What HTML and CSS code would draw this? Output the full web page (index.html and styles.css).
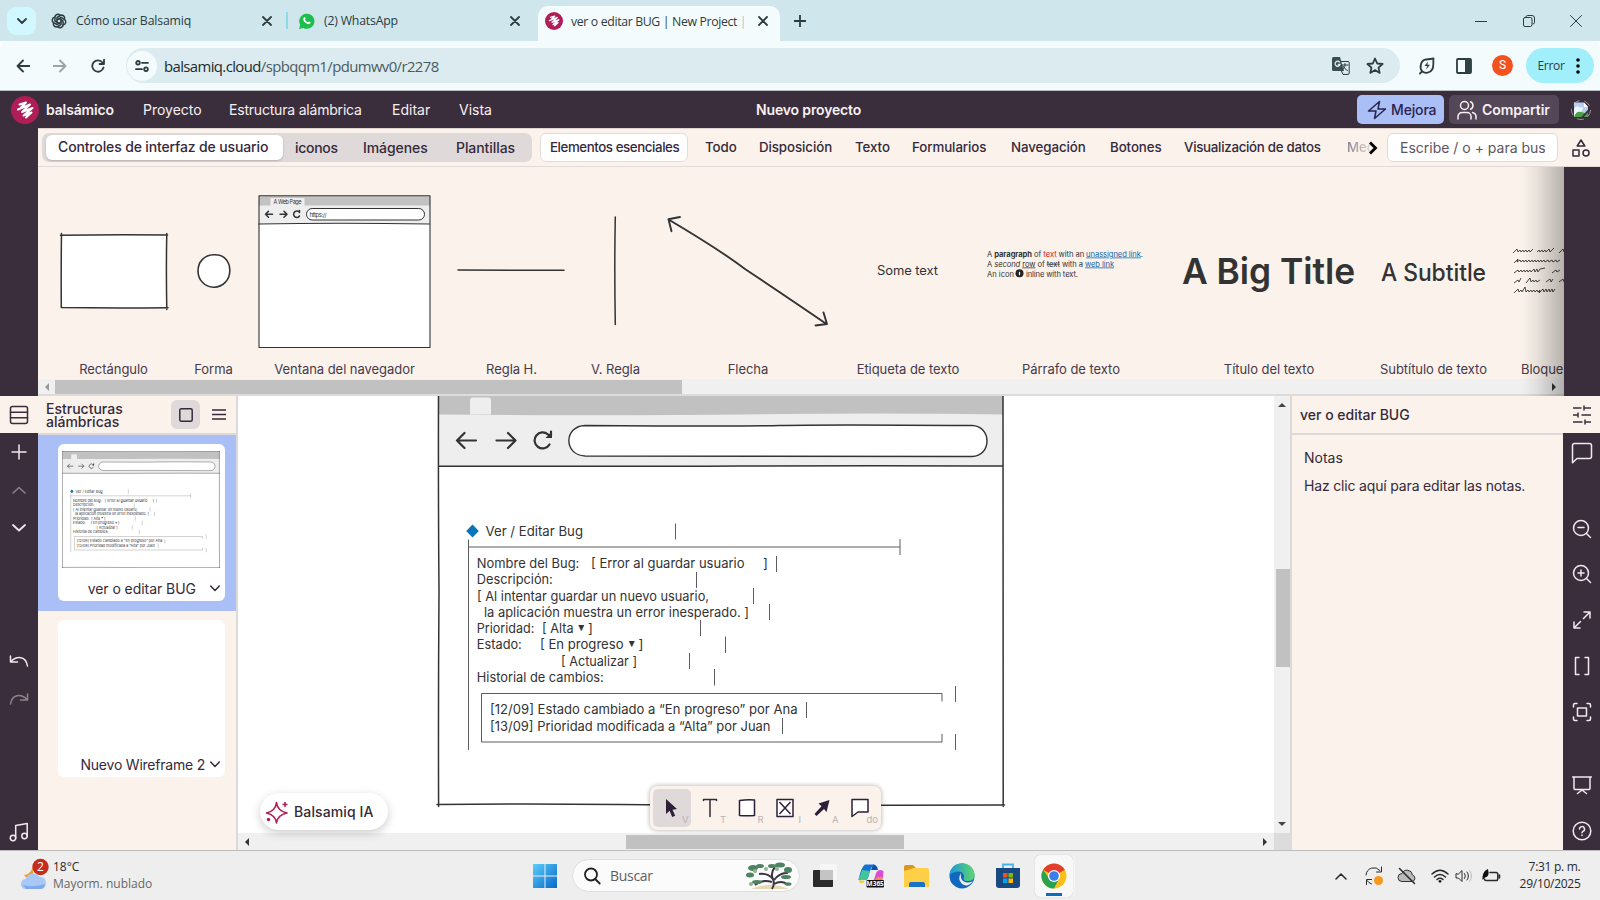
FILE: index.html
```html
<!DOCTYPE html>
<html lang="es">
<head>
<meta charset="utf-8">
<title>ver o editar BUG | New Project</title>
<link rel="stylesheet" href="styles.css">
</head>
<body>
<div class="screen">

  <header class="tabs">
    <span class="tab-search"><svg width="12" height="12" viewBox="0 0 12 12"><path d="M2 4l4 4 4-4" class="ln b2"/></svg></span>
    <div class="tab t1">
      <svg class="fav" width="16" height="16" viewBox="0 0 16 16"><g class="ln b15"><path id="petal" d="M6 9.200V4.500L9.300 2.500a3 3 0 0 1 4.200 3.600"/><use href="#petal" transform="rotate(60 8 8)"/><use href="#petal" transform="rotate(120 8 8)"/><use href="#petal" transform="rotate(180 8 8)"/><use href="#petal" transform="rotate(240 8 8)"/><use href="#petal" transform="rotate(300 8 8)"/></g></svg>
      <span class="tt">Cómo usar Balsamiq</span>
      <svg class="x" width="10" height="10" viewBox="0 0 10 10"><path d="M1 1l8 8M9 1L1 9" class="ln b2"/></svg>
    </div>
    <i class="tsep"></i>
    <div class="tab t2">
      <svg class="fav" width="16" height="16" viewBox="0 0 16 16"><path d="M0 16l1.200-4A7.600 7.600 0 1 1 4.300 15z" fill="#1dbf4c"/><path d="M5 4.200c.8-.6 1.200-.2 1.600 1.100.2.500-.7 1-.5 1.400.6 1.300 1.500 2 2.600 2.500.5.200.9-1 1.400-.8 1.700.7 1.700 1 1.300 1.700-1 1.600-3 1.300-5-.3C4.200 8.200 3.500 5.500 5 4.200z" fill="#fff"/></svg>
      <span class="tt">(2) WhatsApp</span>
      <svg class="x" width="10" height="10" viewBox="0 0 10 10"><path d="M1 1l8 8M9 1L1 9" class="ln b2"/></svg>
    </div>
    <div class="tab t3">
      <svg class="fav" width="18" height="18" viewBox="0 0 28 28"><use href="#blogo"/></svg>
      <span class="tt on">ver o editar BUG | New Project <i>|</i></span>
      <svg class="x" width="10" height="10" viewBox="0 0 10 10"><path d="M1 1l8 8M9 1L1 9" class="ln b2"/></svg>
    </div>
    <svg class="newtab" width="12" height="12" viewBox="0 0 12 12"><path d="M6 0v12M0 6h12" class="ln b2"/></svg>
    <div class="winctl">
      <svg width="12" height="12" viewBox="0 0 12 12"><path d="M0 6.500h12" class="ln"/></svg>
      <svg width="12" height="12" viewBox="0 0 12 12"><path d="M3 2.500V2q0-1.500 1.500-1.500H9Q11.500.5 11.500 3v4.500Q11.500 9 10 9M2 2.500h5.500Q9 2.500 9 4v5.500Q9 11.500 7.500 11.500H2Q.5 11.500.5 10V4Q.5 2.500 2 2.500z" class="ln"/></svg>
      <svg width="12" height="12" viewBox="0 0 12 12"><path d="M.5.5l11 11M11.500.5l-11 11" class="ln"/></svg>
    </div>
  </header>

  <div class="toolbar">
    <svg class="nv" width="14" height="14" viewBox="0 0 14 14"><path d="M13.500 7H1.500M7 1.500L1.500 7 7 12.500" class="ln b2"/></svg>
    <svg class="nv dim" width="14" height="14" viewBox="0 0 14 14"><path d="M.5 7h12M7 1.500L12.500 7 7 12.500" class="ln b2"/></svg>
    <svg class="nv" width="14" height="14" viewBox="0 0 14 14"><path d="M12.500 8.500A5.700 5.700 0 1 1 11.500 3.500L13 5M13 .5V5H8.500" class="ln b2"/></svg>
    <div class="omni">
      <span class="site"><svg width="14" height="12" viewBox="0 0 14 12"><g class="ln b2"><circle cx="3" cy="2.800" r="1.800"/><path d="M7 2.800h6M1 9.200h6"/><circle cx="11" cy="9.200" r="1.800"/></g></svg></span>
      <span class="url"><b>balsamiq.cloud</b>/spbqqm1/pdumwv0/r2278</span>
      <svg class="tr" width="18" height="18" viewBox="0 0 18 18"><path d="M1.500 0H8l4 14H1.500Q0 14 0 12.500v-11Q0 0 1.500 0z" fill="#3b4f53"/><path d="M9 4.500h7q1.200 0 1.200 1.200v10.500q0 1.200-1.200 1.200h-5L9.500 14" class="ln" stroke="#3b4f53"/><path d="M10 8h6M13 6.500V8c0 2-1 4-3 5M11.500 9.500c.5 1.500 2 3 4 4" class="ln" stroke="#3b4f53"/><path d="M7.800 5.500A2.500 2.500 0 1 0 8 7.500H5.800" fill="none" stroke="#dcebef" stroke-width="1.300"/></svg>
      <svg width="18" height="18" viewBox="0 0 18 18"><path d="M9 1.500l2.200 5 5.400.5-4.100 3.600 1.200 5.300L9 13.100l-4.700 2.800 1.200-5.300L1.400 7l5.400-.5z" class="ln b2"/></svg>
    </div>
    <svg class="leaf" width="18" height="18" viewBox="0 0 18 18"><path d="M2 16.500l2-2M4 14.200C1 10 3 3 8 2.500c3-.3 5-.5 7.500-1C15 6 16 9 14.500 12c-2 4-7.500 5-10.500 2.200z" class="ln b2"/><path d="M10 4.500L6.500 9h2.700L8 12.500 12 7.800H9.300z" fill="#2c3c3f"/></svg>
    <svg width="16" height="16" viewBox="0 0 16 16"><rect x="1" y="1" width="14" height="14" rx="1" class="ln b2"/><path d="M9 1h6v14H9z" fill="#2f4347"/></svg>
    <span class="ava">S</span>
    <span class="err">Error<svg width="4" height="16" viewBox="0 0 4 16"><circle cx="2" cy="2" r="1.800"/><circle cx="2" cy="8" r="1.800"/><circle cx="2" cy="14" r="1.800"/></svg></span>
  </div>

  <nav class="apphead">
    <svg width="28" height="28" viewBox="0 0 28 28"><g id="blogo"><circle cx="14" cy="14" r="14" fill="#b01e58"/><path d="M8.500 8.500L15 6.500 10 11.500M7 13.500L19 8.500 11 16 21.500 12 12.500 19.500 20.500 16.500 15 21.500" fill="none" stroke="#fff" stroke-width="2" stroke-linejoin="round" stroke-linecap="round"/></g></svg>
    <b class="brand">balsámico</b><span>Proyecto</span><span class="snug">Estructura alámbrica</span><span>Editar</span><span>Vista</span>
    <span class="ptitle">Nuevo proyecto</span>
    <span class="btn up"><svg width="20" height="20" viewBox="0 0 20 20"><path d="M12.500 1.500L1.500 11H9l-1.500 7.500L18.500 9H11z" class="ln b15"/></svg><em>Mejora</em></span>
    <span class="btn share"><svg width="20" height="20" viewBox="0 0 20 20"><g class="ln b15"><circle cx="7.500" cy="5.500" r="4"/><path d="M1 19v-2.500a4 4 0 0 1 4-4h5a4 4 0 0 1 4 4V19M13.500 1.800a4 4 0 0 1 0 7.400M15.500 12.500q3.500 1 3.500 4V19"/></g></svg><em>Compartir</em></span>
    <svg class="broken" width="20" height="20" viewBox="0 0 20 20"><circle cx="10" cy="10" r="9.500" fill="#3b2e3c" stroke="#9b919c" stroke-dasharray="7 5"/><path d="M3 2.500h10l4 4.500v10H3z" fill="#b8d0f0"/><path d="M3 9q3-5 6-1 2-2 3 0L8 17H3z" fill="#eef6fd"/><path d="M3 17q2-6 7-5l4 1 3-2v6z" fill="#4ba046"/><path d="M13 2.500V7h4z" fill="#fff"/><path d="M10 17.500L17.500 9v2.500l-5 6z" fill="#3b2e3c"/></svg>
  </nav>

  <div class="catrow">
    <div class="seg"><b>Controles de interfaz de usuario</b><span>iconos</span><span>Imágenes</span><span>Plantillas</span></div>
    <span class="cat sel">Elementos esenciales</span>
    <div class="cats"><span>Todo</span><span>Disposición</span><span>Texto</span><span>Formularios</span><span>Navegación</span><span>Botones</span><span class="snug">Visualización de datos</span><span class="fade">Mec</span></div>
    <svg class="more" width="10" height="14" viewBox="0 0 10 14"><path d="M2 1.500L7.500 7 2 12.500" fill="none" stroke="#000" stroke-width="2.800"/></svg>
    <span class="quick"><span>Escribe / o + para buscar</span></span>
    <svg class="shapes" width="18" height="18" viewBox="0 0 18 18"><g class="ln b15"><path d="M9 1l3.800 6H5.200z"/><rect x="1" y="11" width="6" height="6"/><circle cx="14" cy="14" r="3"/></g></svg>
  </div>

  <section class="library">
    <div class="shelf">
      <div class="it"><svg width="110" height="80" viewBox="59 231 110 80"><path d="M61.500 235h105v73h-105z" fill="#fff"/><path d="M60.500 235.300Q110 234.500 167.500 235M61.500 233.500Q61 270 61.300 307.500Q110 308.300 168 307.700M166.800 233.500Q166 270 166.800 309.500" class="sk"/></svg><p>Rectángulo</p></div>
      <div class="it"><svg width="34" height="34" viewBox="0 0 34 34"><path d="M17 .8C28 .5 33 8 32.800 17S26 33 17 33.200 1 26 1 17 7 1 17 .8z" fill="#fff" stroke="#333" stroke-width="1.600"/></svg><p>Forma</p></div>
      <div class="it"><svg width="173" height="153" viewBox="258.500 195 173 153"><path d="M259.500 196h171v152h-171z" fill="#fff"/><path d="M259.500 196h171v28h-171z" fill="#eee"/><path d="M259.500 196h171v9.500h-171z" fill="#c2c2c2"/><path d="M271 198h34v8h-34z" fill="#eee"/><path d="M259.500 347.500V195.800h171v151.700z" class="sk th"/><path d="M259 224q80-1.500 171 0" class="sk th" stroke="#777"/><rect x="307" y="208.500" width="118" height="11.500" rx="5.700" fill="#fff" stroke="#333"/><path d="M273 214.300h-7m3-3l-3 3 3 3M280.500 214.300h7m-3-3l3 3-3 3M300 216a3.200 3.200 0 1 1 0-3.500v-2" class="sk"/><text x="274" y="204.300" font-size="5.500" textLength="28">A Web Page</text><text x="310" y="216.500" font-size="6" textLength="17">https://</text></svg><p>Ventana del navegador</p></div>
      <div class="it"><svg class="hr" width="110" height="4" viewBox="0 0 110 4"><path d="M1 2q50 .3 106 .3" class="sk"/></svg><p>Regla H.</p></div>
      <div class="it"><svg class="vr" width="4" height="110" viewBox="0 0 4 110"><path d="M2.300 1q-1 50 0 107.500" class="sk"/></svg><p>V. Regla</p></div>
      <div class="it"><svg width="162" height="112" viewBox="667 215 162 112"><path d="M668.500 219.500Q720 250 745 269Q790 299 826.500 324M680 217l-11.500 2.200 3 12M823.500 312.500l3.500 11.500-11.500 1.500" class="sk b2"/></svg><p>Flecha</p></div>
      <div class="it"><svg width="62" height="20" viewBox="0 0 62 20"><text x="0" y="13.500" font-size="12.800" textLength="61" lengthAdjust="spacingAndGlyphs">Some text</text></svg><p>Etiqueta de texto</p></div>
      <div class="it"><svg class="para" width="158" height="34" viewBox="986 246 158 34"><g font-size="7.600"><text x="987" y="255.500" textLength="156">A <tspan font-weight="700">paragraph</tspan> of <tspan fill="#d32020">text</tspan> with an <tspan class="lk">unassigned link</tspan>.</text><text x="987" y="265.500" textLength="127">A <tspan font-style="italic">second</tspan> <tspan class="ul">row</tspan> of <tspan class="st">text</tspan> with a <tspan class="lk">web link</tspan></text><text x="987" y="275.500" textLength="27">An icon</text><text x="1026" y="275.500" textLength="52">inline with text.</text></g><circle cx="1019.500" cy="272.300" r="4" fill="#222"/><path d="M1019.500 270.800v3.500" stroke="#fff" stroke-width="1.200"/></svg><p>Párrafo de texto</p></div>
      <div class="it"><svg width="174" height="44" viewBox="0 0 174 44"><text x="0" y="34.500" font-size="36" font-weight="600" textLength="173" lengthAdjust="spacingAndGlyphs">A Big Title</text></svg><p>Título del texto</p></div>
      <div class="it"><svg width="106" height="34" viewBox="0 0 106 34"><text x="0" y="26.500" font-size="24" font-weight="500" textLength="105" lengthAdjust="spacingAndGlyphs">A Subtitle</text></svg><p>Subtítulo de texto</p></div>
      <div class="it last"><svg width="80" height="50" viewBox="0 0 80 50"><g fill="none" stroke="#333" stroke-width=".9"><path d="M0 7l4-4 1 3 2-2 1 2 2-2 1 2 2-2 1 2 2-2 1 2 3-3M24 6l2-2 1 2 2-2 1 2 2-2 1 2 3-3 1 3 4-4M46 7l4-4 1 3"/><path d="M1 17l4-4-1 3 3-2 1 2 2-2 1 2 2-2 1 2 2-2 1 2 2-2 1 2 2-2 1 2 2-2 1 2 2-2 1 2 2-2 1 2 3-2 1 2 3-2 1 2 3-2 1 2 3-2"/><path d="M1 27l4-3 1 2 2-2 1 2 2-2 1 2 2-2 1 2 2-2 1 2 3-3 1 3 2-3 1 3 2-3 5-1M39 27l4-3 1 2 3-2"/><path d="M1 37l4-3 1 2 2-4M13 37l4-5 1 4 2-2 1 2 2-2 1 2 3-2M33 36l4-3 1 3 2-3M46 36l4-3 1 3"/><path d="M1 47l4-4 1 3 2-2 1 2 3-5 1 5 2-2 1 2 2-2 1 2 2-2 1 2 2-2 1 2 2-2-1 3 4-4 1 3 2-3 1 3 2-3 1 3 2-3 1 3 2-3"/></g></svg><p>Bloque de texto</p></div>
    </div>
    <div class="hbar lib"><svg width="8" height="10" viewBox="0 0 8 10"><path d="M6 1v8L2 5z" fill="#999"/></svg><i></i><svg class="end" width="8" height="10" viewBox="0 0 8 10"><path d="M2 1v8l4-4z" fill="#333"/></svg></div>
    <div class="shade"></div>
  </section>

  <main class="work">
    <aside class="rail left">
      <span class="lit"><svg width="20" height="20" viewBox="0 0 20 20"><g class="ln b15"><rect x="1.500" y="1.500" width="17" height="17" rx="2"/><path d="M1.500 7.200h17M1.500 12.800h17"/></g></svg></span>
      <span><svg width="16" height="16" viewBox="0 0 16 16"><path d="M8 1v14M1 8h14" class="ln b15"/></svg></span>
      <span class="dim"><svg width="14" height="8" viewBox="0 0 14 8"><path d="M1 7l6-5.500L13 7" class="ln b15"/></svg></span>
      <span><svg width="14" height="8" viewBox="0 0 14 8"><path d="M1 1l6 5.500L13 1" class="ln b2"/></svg></span>
      <i></i>
      <span><svg width="20" height="12" viewBox="0 0 20 12"><path d="M1.500 1v6h7M2 6.500C8 .5 17 1 18.500 11" class="ln b15"/></svg></span>
      <span class="dim"><svg width="20" height="12" viewBox="0 0 20 12"><path d="M18.500 1v6h-7M18 6.500C12 .5 3 1 1.500 11" class="ln b15"/></svg></span>
      <i></i>
      <span><svg width="20" height="20" viewBox="0 0 20 20"><g class="ln b15"><circle cx="4" cy="16" r="2.700"/><circle cx="15.500" cy="14" r="2.700"/><path d="M6.700 16V3.500L18.200 1.500V14"/></g></svg></span>
    </aside>

    <aside class="frames">
      <div class="fhead"><b>Estructuras<br>alámbricas</b><span class="view"><svg width="14" height="14" viewBox="0 0 14 14"><rect x=".8" y=".8" width="12.400" height="12.400" rx="1.500" class="ln b15"/></svg></span><svg width="14" height="11" viewBox="0 0 14 11"><path d="M0 1h14M0 5.500h14M0 10h14" class="ln b15"/></svg></div>
      <div class="fsel">
        <div class="card"><svg class="thumb" width="158" height="117" viewBox="437 386 568 420.500"><use href="#wire"/></svg><p><span>ver o editar BUG</span><svg width="10" height="7" viewBox="0 0 10 7"><path d="M.7 1L5 5.500 9.300 1" class="ln b15"/></svg></p></div>
      </div>
      <div class="card empty"><p><span>Nuevo Wireframe 2</span><svg width="10" height="7" viewBox="0 0 10 7"><path d="M.7 1L5 5.500 9.300 1" class="ln b15"/></svg></p></div>
    </aside>

    <div class="stage">
      <svg class="canvas" width="1036" height="437" viewBox="238 396 1036 437">
        <g id="wire">
          <path d="M439 388h564v417H439z" fill="#fff"/>
          <path d="M439 388h564v78H439z" fill="#eee"/>
          <path d="M439 388h564v26.500q-120-1.500-220-.5-180 2-344 .5z" fill="#c1c1c1"/>
          <path d="M470 414.500v-14q0-3 3-3h15q3 0 3 3v14z" fill="#eee"/>
          <path d="M438.500 387.500Q700 386 1003 387.500M438.500 387Q438.200 500 439 590Q438.200 700 438.600 806.500M1003 387Q1002.500 600 1003.200 806.500M437 804.500Q520 803.500 620 804.500T1004.500 805M439 466Q600 466.700 740 466T1003 466" class="sk"/>
          <path d="M585 425.500Q740 426.500 780 425.500T972 425.500C992 426 992 456 972 456.500Q760 455.500 585 456C563 455 564 426 585 425.500z" fill="#fff" stroke="#333" stroke-width="1.400"/>
          <path d="M476 440.500h-19m7.500-7.500l-7.500 7.500 7.500 7.500M496.500 440.500h19m-7.500-7.500l7.500 7.500-7.500 7.500M549.500 444.500a8 8 0 1 1-1.500-10l3 1.500v-4.500" class="sk arrow"/><path d="M545.500 438h6.500v-6.500z" fill="#333"/>
          <path d="M472.500 524.500l6.300 6.500-6.300 6.500-6.300-6.500z" fill="#0b74b8"/>
          <path d="M468.500 539.500V750M468.500 547H900M900 539v16M675.500 523.500v16M776.500 556v16M696.500 572v16M753.500 588v16M769.500 604v16M700.500 620v16M725.500 636.500v16.500M689.500 653v16M714.500 669v16.500M481.500 742V693.500H942v8M481.500 742H942v-8M955.500 686v16M955.500 734v16M806.500 702v16M782.500 718v16" fill="none" stroke="#5c5c5c" stroke-width="1"/>
          <g font-size="13.500">
            <text x="485.500" y="535.800" textLength="97.500" lengthAdjust="spacingAndGlyphs">Ver / Editar Bug</text>
            <text x="476.800" y="568.300" textLength="102.500" lengthAdjust="spacingAndGlyphs">Nombre del Bug:</text>
            <text x="591" y="568.300" textLength="153.500" lengthAdjust="spacingAndGlyphs">[ Error al guardar usuario</text><text x="763" y="568.300">]</text>
            <text x="476.800" y="584" textLength="76" lengthAdjust="spacingAndGlyphs">Descripción:</text>
            <text x="477" y="601" textLength="232" lengthAdjust="spacingAndGlyphs">[ Al intentar guardar un nuevo usuario,</text>
            <text x="484" y="617" textLength="265" lengthAdjust="spacingAndGlyphs">la aplicación muestra un error inesperado. ]</text>
            <text x="476.800" y="633.200" textLength="57.500" lengthAdjust="spacingAndGlyphs">Prioridad:</text><text x="542" y="633.200" textLength="31.500" lengthAdjust="spacingAndGlyphs">[ Alta</text><text x="578" y="630.500" font-size="8" textLength="6.500" lengthAdjust="spacingAndGlyphs">▼</text><text x="588" y="633.200">]</text>
            <text x="476.800" y="649.300" textLength="45" lengthAdjust="spacingAndGlyphs">Estado:</text><text x="540" y="649.300" textLength="83.500" lengthAdjust="spacingAndGlyphs">[ En progreso</text><text x="628.500" y="646.600" font-size="8" textLength="6.500" lengthAdjust="spacingAndGlyphs">▼</text><text x="638.500" y="649.300">]</text>
            <text x="561" y="665.700" textLength="76" lengthAdjust="spacingAndGlyphs">[ Actualizar ]</text>
            <text x="476.800" y="682" textLength="127" lengthAdjust="spacingAndGlyphs">Historial de cambios:</text>
            <text x="490" y="714.300" textLength="307.500" lengthAdjust="spacingAndGlyphs">[12/09] Estado cambiado a “En progreso” por Ana</text>
            <text x="490" y="731" textLength="280.500" lengthAdjust="spacingAndGlyphs">[13/09] Prioridad modificada a “Alta” por Juan</text>
          </g>
        </g>
      </svg>
      <div class="vbar"><svg width="10" height="8" viewBox="0 0 10 8"><path d="M1 6h8L5 2z" fill="#444"/></svg><i></i><svg class="end" width="10" height="8" viewBox="0 0 10 8"><path d="M1 2h8L5 6z" fill="#444"/></svg></div>
      <div class="hbar cv"><svg width="8" height="10" viewBox="0 0 8 10"><path d="M6 1v8L2 5z" fill="#333"/></svg><i></i><svg class="end" width="8" height="10" viewBox="0 0 8 10"><path d="M2 1v8l4-4z" fill="#333"/></svg></div>
      <div class="corner"></div>
      <div class="ai"><svg width="24" height="24" viewBox="0 0 24 24"><path d="M11.500 2.500Q12.500 11 22 13 12.500 15 11.500 23 10.500 15 1.500 13 10.500 11 11.500 2.500zM20 2v5M17.500 4.500h5" fill="none" stroke="#b01e58" stroke-width="1.600" stroke-linejoin="round"/><circle cx="3.500" cy="19.500" r="1.700" fill="#b01e58"/></svg>Balsamiq IA</div>
      <div class="tools">
        <span class="cur"><svg width="20" height="20" viewBox="0 0 20 20"><path d="M4 1v15l3.600-3.300L10.200 19l3-1.300-2.700-6L15 11z" fill="#2d1f38"/></svg><small>V</small></span>
        <span><svg width="20" height="20" viewBox="0 0 20 20"><path d="M3.500 2.500v-1h13v1M10 1.500V18.500" class="ln b15"/></svg><small>T</small></span>
        <span><svg width="20" height="20" viewBox="0 0 20 20"><path d="M2.500 2.500Q10 1.500 17.500 2v15.500q-8 .5-15 0z" fill="#fff" class="ln2"/></svg><small>R</small></span>
        <span><svg width="20" height="20" viewBox="0 0 20 20"><path d="M2 1.500h16v17H2zM4.500 4l11 12M15.500 4l-11 12" fill="#fff" class="ln2"/></svg><small>I</small></span>
        <span><svg width="20" height="20" viewBox="0 0 20 20"><path d="M17.500 2L6.500 5.500l3 2.800-7 7.700 2 2 7.500-7 2.500 3z" fill="#2d1f38"/></svg><small>A</small></span>
        <span><svg width="20" height="20" viewBox="0 0 20 20"><path d="M2 1.500h16V14H8l-6 4.500z" fill="#fff" class="ln2"/></svg><small class="w">do</small></span>
      </div>
    </div>

    <aside class="props">
      <h2>ver o editar BUG</h2>
      <p class="n1">Notas</p>
      <p class="n2">Haz clic aquí para editar las notas.</p>
    </aside>

    <aside class="rail right">
      <span class="lit"><svg width="18" height="20" viewBox="0 0 18 20"><path d="M0 3h8M11 1v4M11 3h7M0 10h5M5 8v4M9 10h9M0 17h9M12 15v4M12 17h6" class="ln b15"/></svg></span>
      <span><svg width="22" height="22" viewBox="0 0 22 22"><path d="M3.500 1.500h15q2 0 2 2v11q0 2-2 2H6l-4.500 4.200V3.500q0-2 2-2z" class="ln b15"/></svg></span>
      <i></i>
      <span><svg width="20" height="20" viewBox="0 0 20 20"><g class="ln b15"><circle cx="9" cy="9" r="7.500"/><path d="M14.500 14.500l4 4M6 8.500h6"/></g></svg></span>
      <span><svg width="20" height="20" viewBox="0 0 20 20"><g class="ln b15"><circle cx="9" cy="9" r="7.500"/><path d="M14.500 14.500l4 4M6 9h6M9 6v6"/></g></svg></span>
      <span><svg width="20" height="20" viewBox="0 0 20 20"><path d="M12 2h6v6M18 2l-6.500 6.500M2 12v6h6M2 18l6.500-6.500" class="ln b15"/></svg></span>
      <span><svg width="18" height="20" viewBox="0 0 18 20"><path d="M6 1.500H2.500v17H6M12 1.500h3.500v17H12" class="ln b15"/></svg></span>
      <span><svg width="20" height="20" viewBox="0 0 20 20"><path d="M1.500 5V3q0-1.500 1.500-1.500h2M15 1.500h2q1.500 0 1.500 1.500v2M18.500 15v2q0 1.500-1.500 1.500h-2M5 18.500H3Q1.500 18.500 1.500 17v-2M5.500 6h9v8h-9z" class="ln b15"/></svg></span>
      <i></i>
      <span><svg width="20" height="20" viewBox="0 0 20 20"><path d="M.5 2h19M2 2v11.500q0 1 1 1h14q1 0 1-1V2M5.500 18.500l4.500-3.500 4.500 3.500" class="ln b15"/></svg></span>
      <span class="help"><svg width="20" height="20" viewBox="0 0 20 20"><circle cx="10" cy="10" r="8.800" class="ln b15"/><path d="M7.500 8a2.500 2.500 0 1 1 3.500 2.400q-1 .6-1 1.400M10 14v.5" class="ln b15"/></svg></span>
    </aside>
  </main>

  <footer class="taskbar">
    <svg class="wx" width="30" height="32" viewBox="20 855 30 32"><path d="M32 861q2 9-8 11 3 5 10 3z" fill="#f0a030"/><path d="M26 886a5 5 0 0 1-.5-10 8 8 0 0 1 14-2q6-1 6.500 6 0 5.500-5 6z" fill="#a9c8f5"/><path d="M23 882q10 3 22-1-1 5-5 5H26z" fill="#7ea9ea"/><circle cx="40.500" cy="864" r="8.200" fill="#c42b1c"/><text x="40.500" y="868.300" font-size="12" text-anchor="middle" class="badge">2</text></svg>
    <div class="wtxt"><span>18°C</span><small>Mayorm. nublado</small></div>
    <svg class="win" width="26" height="26" viewBox="0 0 26 26"><defs><linearGradient id="wg" x1="0" y1="0" x2="1" y2="1"><stop offset="0" stop-color="#5ccdfb"/><stop offset="1" stop-color="#0768c8"/></linearGradient></defs><path d="M1 1h11.500v11.500H1zM13.500 1H25v11.500H13.500zM1 13.500h11.500V25H1zM13.500 13.500H25V25H13.500z" fill="url(#wg)"/></svg>
    <div class="search"><svg width="18" height="18" viewBox="0 0 18 18"><g class="ln b2"><circle cx="8" cy="7.500" r="6"/><path d="M12.200 12l4.500 4.500"/></g></svg><span>Buscar</span>
      <svg class="tree" width="48" height="28" viewBox="0 0 48 28"><path d="M6 27q18-8 38 0z" fill="#e7d9b0"/><path d="M27 27q3-5 1-10-5-6-14-5m15 6q6-8 14-7M28 17q-3-6 2-12M27 20q-10-3-17 3m19-1q7-4 13 0" fill="none" stroke="#3a3540" stroke-width="2"/><g fill="#4d8363"><ellipse cx="8" cy="6" rx="5" ry="3"/><ellipse cx="5" cy="13" rx="4" ry="2.500"/><ellipse cx="15" cy="4" rx="4" ry="2"/><ellipse cx="27" cy="4" rx="4" ry="2"/><ellipse cx="35" cy="3" rx="5" ry="2.500"/><ellipse cx="43" cy="8" rx="4" ry="3"/><ellipse cx="41" cy="15" rx="5" ry="2"/><ellipse cx="12" cy="20" rx="5" ry="2"/><ellipse cx="43" cy="22" rx="3.500" ry="1.800"/></g><g fill="#8db58a"><circle cx="10" cy="9" r="2"/><circle cx="32" cy="7" r="2"/><circle cx="21" cy="7" r="2"/><circle cx="6" cy="22" r="2"/></g></svg>
    </div>
    <div class="apps">
      <span><svg width="28" height="28" viewBox="0 0 28 28"><rect x="2" y="8" width="20" height="17" rx="1" fill="#2a2a2a"/><rect x="9" y="2" width="17" height="16" rx="1" fill="#f6f6f6"/><rect x="9" y="8" width="13" height="10" fill="#c4c4c4"/></svg></span>
      <span><svg width="28" height="28" viewBox="0 0 28 28"><path d="M1.500 18Q4 5 8 2.500h9q-3 2-5 10Q11 18 8 18z" fill="#1573d6"/><path d="M3 14l2-6 8 1-3 9H3q-3 0 0-4z" fill="#45c49a"/><path d="M16 2.500q4 0 5 5.500h-7z" fill="#0c4fb5"/><path d="M26.500 9q0 13-6 14h-7q3-3 5-10 1-5 5-5z" fill="#d64fd0"/><path d="M20 15h6l-3 8h-9z" fill="#f58a52"/><path d="M2 18l6 1-2 2q-4 1-4-3z" fill="#e5d33e"/><rect x="9.500" y="18" width="17.500" height="7.500" rx="1" fill="#111"/><text x="18.200" y="24.200" font-size="6.500" text-anchor="middle" class="badge" font-weight="700">M365</text></svg></span>
      <span><svg width="28" height="28" viewBox="0 0 28 28"><path d="M2 5q0-2 2-2h7l3 3v4H2z" fill="#d9981c"/><path d="M2 9l10-3h13q2 0 2 2v17H2z" fill="#ffcf47"/><path d="M7 25v-3q0-2 2-2h12q2 0 2 2v3z" fill="#1873c8"/></svg></span>
      <span><svg width="28" height="28" viewBox="0 0 28 28"><defs><linearGradient id="eg" x1="0" y1="0" x2="1" y2="0"><stop offset="0" stop-color="#1c96dd"/><stop offset="1" stop-color="#61d66b"/></linearGradient></defs><circle cx="14" cy="14" r="12.500" fill="#1169bd"/><path d="M1.500 13C3-3 26-2 26.500 13q0 6-7 6-5 0-3.500-4 0-5-5-5.500-6 0-9.500 3.500z" fill="url(#eg)"/><path d="M13 11q-4 6 1 11 6 4 11-3-5 3-10 0-3-3-2-8z" fill="#ededed"/></svg></span>
      <span><svg width="28" height="28" viewBox="0 0 28 28"><path d="M9 6V2.500h10V6" fill="none" stroke="#45b3ee" stroke-width="1.800"/><path d="M2 6h24v17q0 3-3 3H5q-3 0-3-3z" fill="#1a4880"/><path d="M9 11h4.500v4.500H9z" fill="#f25022"/><path d="M14.500 11H19v4.500h-4.500z" fill="#7fba00"/><path d="M9 16.500h4.500V21H9z" fill="#00a4ef"/><path d="M14.500 16.500H19V21h-4.500z" fill="#ffb900"/></svg></span>
      <span class="act"><svg width="28" height="28" viewBox="0 0 28 28"><circle cx="14" cy="14" r="12.500" fill="#fbc116"/><path d="M14 14L3.200 7.700A12.500 12.500 0 0 1 24.800 7.700z" fill="#e33b2e"/><path d="M3.200 7.700A12.500 12.500 0 0 0 14 26.500l5-9.500-9 1z" fill="#2ba24c"/><circle cx="14" cy="14" r="6" fill="#fff"/><circle cx="14" cy="14" r="4.800" fill="#3b7ded"/></svg></span>
    </div>
    <div class="tray">
      <svg width="12" height="8" viewBox="0 0 12 8"><path d="M1 7l5-5 5 5" class="ln b15"/></svg>
      <svg width="20" height="20" viewBox="0 0 20 20"><path d="M2 9a8 8 0 0 1 14-4.500M17.500 1v5h-5M7.500 18A8 8 0 0 1 3 14.500M2.500 18.500v-5h5" class="ln"/><circle cx="14.500" cy="14.500" r="4.500" fill="#f7981d"/></svg>
      <svg width="20" height="18" viewBox="0 0 20 18"><path d="M5 14.500a4 4 0 0 1 0-8A5.500 5.500 0 0 1 15.500 8a3.400 3.400 0 0 1 0 6.500z" fill="#bbb" stroke="#333"/><path d="M2.500 1.500l15 15" class="ln b15"/></svg>
      <svg width="18" height="14" viewBox="0 0 18 14"><path d="M1 5q8-7.500 16 0M3.500 8q5.500-5 11 0M6 10.500q3-2.500 6 0" class="ln b15"/><circle cx="9" cy="12.300" r="1.400" fill="#222"/></svg>
      <svg width="18" height="14" viewBox="0 0 18 14"><path d="M1 5v4h2.500L7 12.500v-11L3.500 5zM9.500 4.500q2 2.500 0 5M12 3q3 4 0 8" class="ln"/><path d="M14.500 1.500q4 5.500 0 11" fill="none" stroke="#bbb"/></svg>
      <svg width="20" height="16" viewBox="0 0 20 16"><path d="M9 4.500h6q1.800 0 1.800 1.800v4.400q0 1.800-1.800 1.800H5q-1.500 0-1.500-1.500M18.500 7v3" class="ln b15"/><path d="M7 1Q2 3 1.500 9v3L4 9.500Q9 9 7 1z" fill="#111"/></svg>
      <div class="clock"><span>7:31 p. m.</span><span>29/10/2025</span></div>
    </div>
  </footer>
</div>
</body>
</html>
```

FILE: styles.css
```css
* { box-sizing: border-box; }
body { margin: 0; background: #fff; font-family: Inter, "Open Sans", sans-serif; color: #352a3a; overflow: hidden; }
.screen { width: 1600px; height: 900px; display: grid; grid-template-rows: 41px 50px 37px 39px 229px 454px 50px; overflow: hidden; background: linear-gradient(#3b2e3c, #3b2e3c) 0 128px / 1600px 722px no-repeat; }
p, h2 { margin: 0; font-weight: 400; }
em { font-style: normal; }
svg { display: block; flex: none; }
text { font-family: Inter, sans-serif; fill: #333; }
.ln { fill: none; stroke: currentColor; stroke-width: 1; stroke-linecap: round; stroke-linejoin: round; }
.ln2 { stroke: #2d1f38; stroke-width: 1.5; stroke-linejoin: round; }
.b2 { stroke-width: 1.8; }
.b15 { stroke-width: 1.5; }
.sk { fill: none; stroke: #333; stroke-width: 1.5; stroke-linecap: round; stroke-linejoin: round; }
.sk.b2 { stroke-width: 1.9; }
.th { stroke-width: 1.1; }
.arrow { stroke-width: 2.2; }
.badge { fill: #fff; font-family: "Open Sans", sans-serif; }

/* browser tabs */
.tabs { display: flex; align-items: center; background: #cfe7ec; color: #2c3c3f; font: 12.3px "Open Sans", sans-serif; }
.tab-search { width: 29px; height: 28px; margin: 0 15px 0 7px; border-radius: 9px; background: #d2f8ff; display: grid; place-items: center; }
.tab { display: flex; align-items: center; height: 35px; }
.fav { width: 16px; margin-right: 9px; }
.tt { flex: 1; white-space: nowrap; letter-spacing: -.17px; }
.t1 { width: 221px; }
.tsep { width: 2px; height: 17px; margin: 0 11px 0 14px; background: #8bdbe6; }
.t2 { width: 221px; }
.t2 .tt { letter-spacing: -.2px; }
.t3 { width: 242px; height: 35px; margin: 6px 0 0 18px; padding: 0 12px 5px 7px; background: #f4fbfd; border-radius: 10px 10px 0 0; }
.t3 .fav { width: 18px; margin-right: 8px; }
.tt.on { letter-spacing: -.36px; }
.on i { font-style: normal; color: #b5c1c4; }
.newtab { margin-left: 14px; }
.winctl { display: flex; gap: 35.5px; margin-left: auto; margin-right: 18.5px; }

/* address bar */
.toolbar { display: flex; align-items: center; background: #f4fbfd; border-bottom: 1px solid #b9bfc3; color: #2c3c3f; border-radius: 8px 8px 0 0; padding: 0 7px 0 16px; }
.nv { margin-right: 23px; }
.nv:nth-child(2) { margin-right: 24px; }
.dim { opacity: .45; }
.omni { width: 1274px; height: 35px; margin-left: -2px; border-radius: 18px; background: #dcebef; display: flex; align-items: center; padding: 0 16px 0 1px; }
.site { width: 30px; height: 30px; border-radius: 50%; background: #f4fbfd; display: grid; place-items: center; margin-right: 7px; }
.url { flex: 1; font: 14.9px "Open Sans", sans-serif; color: #4b5c60; letter-spacing: -.6px; }
.url b { font-weight: 400; color: #1d2a2d; }
.tr { margin-right: 16px; }
.leaf { margin: 0 20px 0 18px; }
.ava { width: 21px; height: 21px; border-radius: 50%; margin: 0 12.5px 0 20px; background: #f4511e; color: #fff; font: 12px/21px Roboto, sans-serif; text-align: center; }
.err { width: 68px; height: 35px; border-radius: 18px; background: #a2effc; display: flex; align-items: center; gap: 11px; padding-left: 12px; font: 12px "Open Sans", sans-serif; letter-spacing: -.3px; }

/* application header */
.apphead { display: grid; grid-template-columns: 35px 97px 86px 163px 67px 297px 601px 92px 122px 20px; align-items: center; padding-left: 11px; background: #3b2e3c; color: #f6f0f1; font-size: 14px; white-space: nowrap; }
.brand { font-weight: 600; letter-spacing: -.15px; }
.snug { letter-spacing: -.2px; }
.ptitle { font-weight: 600; letter-spacing: -.15px; }
.btn { height: 29px; border-radius: 5px; display: flex; align-items: center; font-weight: 600; }
.up { width: 87px; background: #a9bff5; color: #2d2350; padding-left: 10px; gap: 4px; font-weight: 500; letter-spacing: -.15px; }
.share { width: 110px; background: #544757; padding-left: 8px; gap: 5px; letter-spacing: -.05px; }

/* category row */
.catrow { display: flex; align-items: center; margin-left: 38px; background: #faf2eb; border-top: 1px solid #ddd4d2; border-bottom: 1px solid #e0dad8; font-size: 13.3px; white-space: nowrap; font-weight: 500; }
.seg { display: grid; grid-template-columns: 237px 12px 68px 93px 1fr; width: 490px; height: 29px; margin-left: 4px; padding: 0 0 1px 4px; align-items: center; background: #dfd9da; border-radius: 7px; font-size: 14px; letter-spacing: -.07px; }
.seg b { height: 25px; line-height: 24px; border-radius: 6px; background: #fff; padding-left: 12px; font-weight: 500; box-shadow: 0 1px 2px #0003; letter-spacing: -.14px; }
.seg span:nth-child(2) { grid-column: 3; letter-spacing: -.3px; }
.sel { width: 148px; height: 29px; line-height: 26px; margin-left: 8px; padding-left: 9px; background: #fff; border: 1px solid #e2dddc; border-radius: 6px; letter-spacing: -.42px; }
.cats { display: grid; grid-template-columns: 54px 96px 57px 99px 99px 74px 163px 26px; margin: 0 0 2px 17px; width: 668px; letter-spacing: -.08px; }
.cats .snug { letter-spacing: -.28px; }
.fade { background: linear-gradient(90deg, #877f88, #e8e0dc); -webkit-background-clip: text; color: transparent; }
.more { margin-left: -5px; }
.quick { width: 171px; height: 29px; margin-left: 9px; padding: 0 12px; line-height: 28px; background: #fff; border: 1px solid #e0dbd9; border-radius: 6px; color: #5d5560; font-weight: 400; font-size: 14px; }
.quick span { display: block; overflow: hidden; }
.shapes { margin-left: 14px; }

/* control library */
.library { position: relative; margin: 0 37px 0 38px; background: #faf2eb; display: grid; grid-template-rows: 212px 15px 2px; }
.shelf { display: grid; grid-template-columns: 151px 49px 213px 121px 87px 178px 142px 184px 212px 117px 71px; overflow: hidden; }
.it { display: grid; grid-template-rows: 181px 16px; padding-top: 13.5px; align-content: start; justify-items: center; align-items: center; font-size: 13px; line-height: 16px; white-space: nowrap; color: #463a4b; letter-spacing: -.05px; }
.it p { margin-top: -2px; }
.it .hr { margin-top: -2px; }
.it .vr { margin-left: -2px; }
.it .para { margin: -15px 0 0 -12px; }
.last { justify-items: start; padding-left: 21px; }
.last p { padding-left: 8px; }
.lk { fill: #1766a8; text-decoration: underline; }
.ul { text-decoration: underline; }
.st { text-decoration: line-through; }
.hbar { display: flex; align-items: center; background: #f0f0f0; }
.hbar i { height: 14px; background: #c1c1c1; }
.hbar .end { margin-left: auto; }
.lib { padding: 0 6px 0 5px; box-shadow: 0 2px #dcdcdc; }
.lib i { width: 627px; margin-left: 4px; }
.shade { position: absolute; right: 0; top: 0; bottom: 0; width: 42px; background: linear-gradient(90deg, transparent, #00000012 35%, #00000045); }

/* workspace */
.work { display: grid; grid-template-columns: 38px 200px 1054px 271px 37px; grid-template-rows: 454px; }
.rail { display: grid; background: #3b2e3c; color: #f0e9ee; }
.rail span { display: grid; place-items: center; }
.left { grid-template-rows: 37px 38px 38px 37px 96px 38px 38px 95px 37px; }
.right { grid-template-rows: 37px 40px 33px 45px 46px 46px 46px 46px 27px 46px 42px; }
.help { padding-top: 3px; }
.rail .lit { background: #faf2eb; color: #3b2e3c; }
.frames { background: #faf2eb; border-right: 2px solid #ddd8da; }
.fhead { display: flex; align-items: center; height: 39px; border-bottom: 2px solid #ddd8da; padding: 0 10px 0 8px; }
.fhead b { flex: 1; font-size: 14px; line-height: 13px; font-weight: 500; }
.view { width: 29px; height: 29px; margin-right: 12px; border-radius: 6px; background: #dfd9da; display: grid; place-items: center; }
.fsel { height: 176px; padding: 9px 0 0 20px; background: #a9bff5; }
.card { width: 167px; height: 157px; border-radius: 6px; background: #fff; padding: 7px 4px 0; display: flex; flex-direction: column; justify-content: space-between; }
.card p { display: flex; align-items: center; gap: 14px; justify-content: flex-end; padding: 0 1px 2px 0; height: 24px; font-size: 14px; letter-spacing: -.05px; }
.empty { margin: 9px 0 0 20px; justify-content: flex-end; }
.empty p { gap: 5px; letter-spacing: -.22px; }

.stage { position: relative; display: grid; grid-template-columns: 1036px 18px; grid-template-rows: 437px 17px; background: #fff; }
.vbar { background: #f0f0f0; border-right: 2px solid #ddd8da; display: flex; flex-direction: column; align-items: center; padding: 5px 0; }
.vbar i { width: 14px; height: 98px; margin: 160px 0 0 2px; background: #c1c1c1; }
.vbar .end { margin-top: auto; }
.cv { padding: 0 5px 0 5px; }
.cv i { width: 278px; margin-left: 375px; height: 14px; }
.corner { background: #dcdcdc; }
.ai { position: absolute; left: 22px; top: 397px; width: 128px; height: 37px; border-radius: 19px; background: #fff; display: flex; align-items: center; gap: 5px; padding-left: 5px; font-size: 14px; font-weight: 500; box-shadow: 0 3px 10px #0003; white-space: nowrap; letter-spacing: .12px; }
.tools { position: absolute; left: 412px; top: 390px; width: 231px; height: 44px; border-radius: 7px; background: #faf2eb; box-shadow: 0 0 5px #0005; display: flex; padding: 3px; }
.tools span { width: 37.6px; height: 38px; display: grid; place-items: center; grid-template-columns: 9px 20px 1fr; border-radius: 5px; }
.tools svg { grid-column: 2; grid-row: 1; }
.tools small { grid-column: 3; grid-row: 1; align-self: end; justify-self: end; margin: 0 2px 1px 0; font-size: 9.5px; line-height: 12px; color: #b9b2b6; }
.tools .w { margin-left: -8px; margin-right: 0; }
.tools .cur { background: #dfd9da; }

.props { background: #faf2eb; font-size: 14px; white-space: nowrap; }
.props h2 { height: 39px; line-height: 38px; padding-left: 8px; font-size: 14px; font-weight: 500; border-bottom: 2px solid #ddd8da; }
.n1 { padding: 14px 0 0 12px; line-height: 17px; }
.n2 { padding: 12px 0 0 12px; line-height: 16px; letter-spacing: -.17px; }

/* taskbar */
.taskbar { display: flex; align-items: center; background: #eee; border-top: 1px solid #bcbcbc; font-family: "Open Sans", sans-serif; color: #2a2a2a; }
.wx { margin: -4px 3px 0 20px; }
.wtxt { width: 479px; font-size: 12px; line-height: 16.5px; display: flex; flex-direction: column; }
.wtxt small { font-size: 12px; color: #666; }
.search { width: 228px; height: 33px; margin-left: 14px; border-radius: 17px; background: #fbfbfb; border: 1px solid #dedede; display: flex; align-items: center; padding: 0 6px 0 10px; color: #222; }
.search span { flex: 1; padding-left: 9px; font-size: 14px; color: #5f5f5f; letter-spacing: -.3px; }
.apps { display: flex; margin-left: 2px; }
.apps span { width: 45.8px; height: 42px; display: grid; place-items: center; }
.apps .act { width: 38px; margin-left: 4px; border-radius: 5px; background: linear-gradient(#0f6cbd, #0f6cbd) 11px 38px / 16px 3px no-repeat #f8f8f8; box-shadow: 0 0 1px #aaa, 2px 0 #f5f5f5; }
.tray { display: grid; grid-template-columns: 36px 31px 35px 31px 17px 36px 72px; place-items: center; margin-left: auto; padding-right: 20px; }
.clock { width: 72px; font-size: 12px; line-height: 16.5px; text-align: right; display: flex; flex-direction: column; letter-spacing: -.28px; white-space: nowrap; }
```
